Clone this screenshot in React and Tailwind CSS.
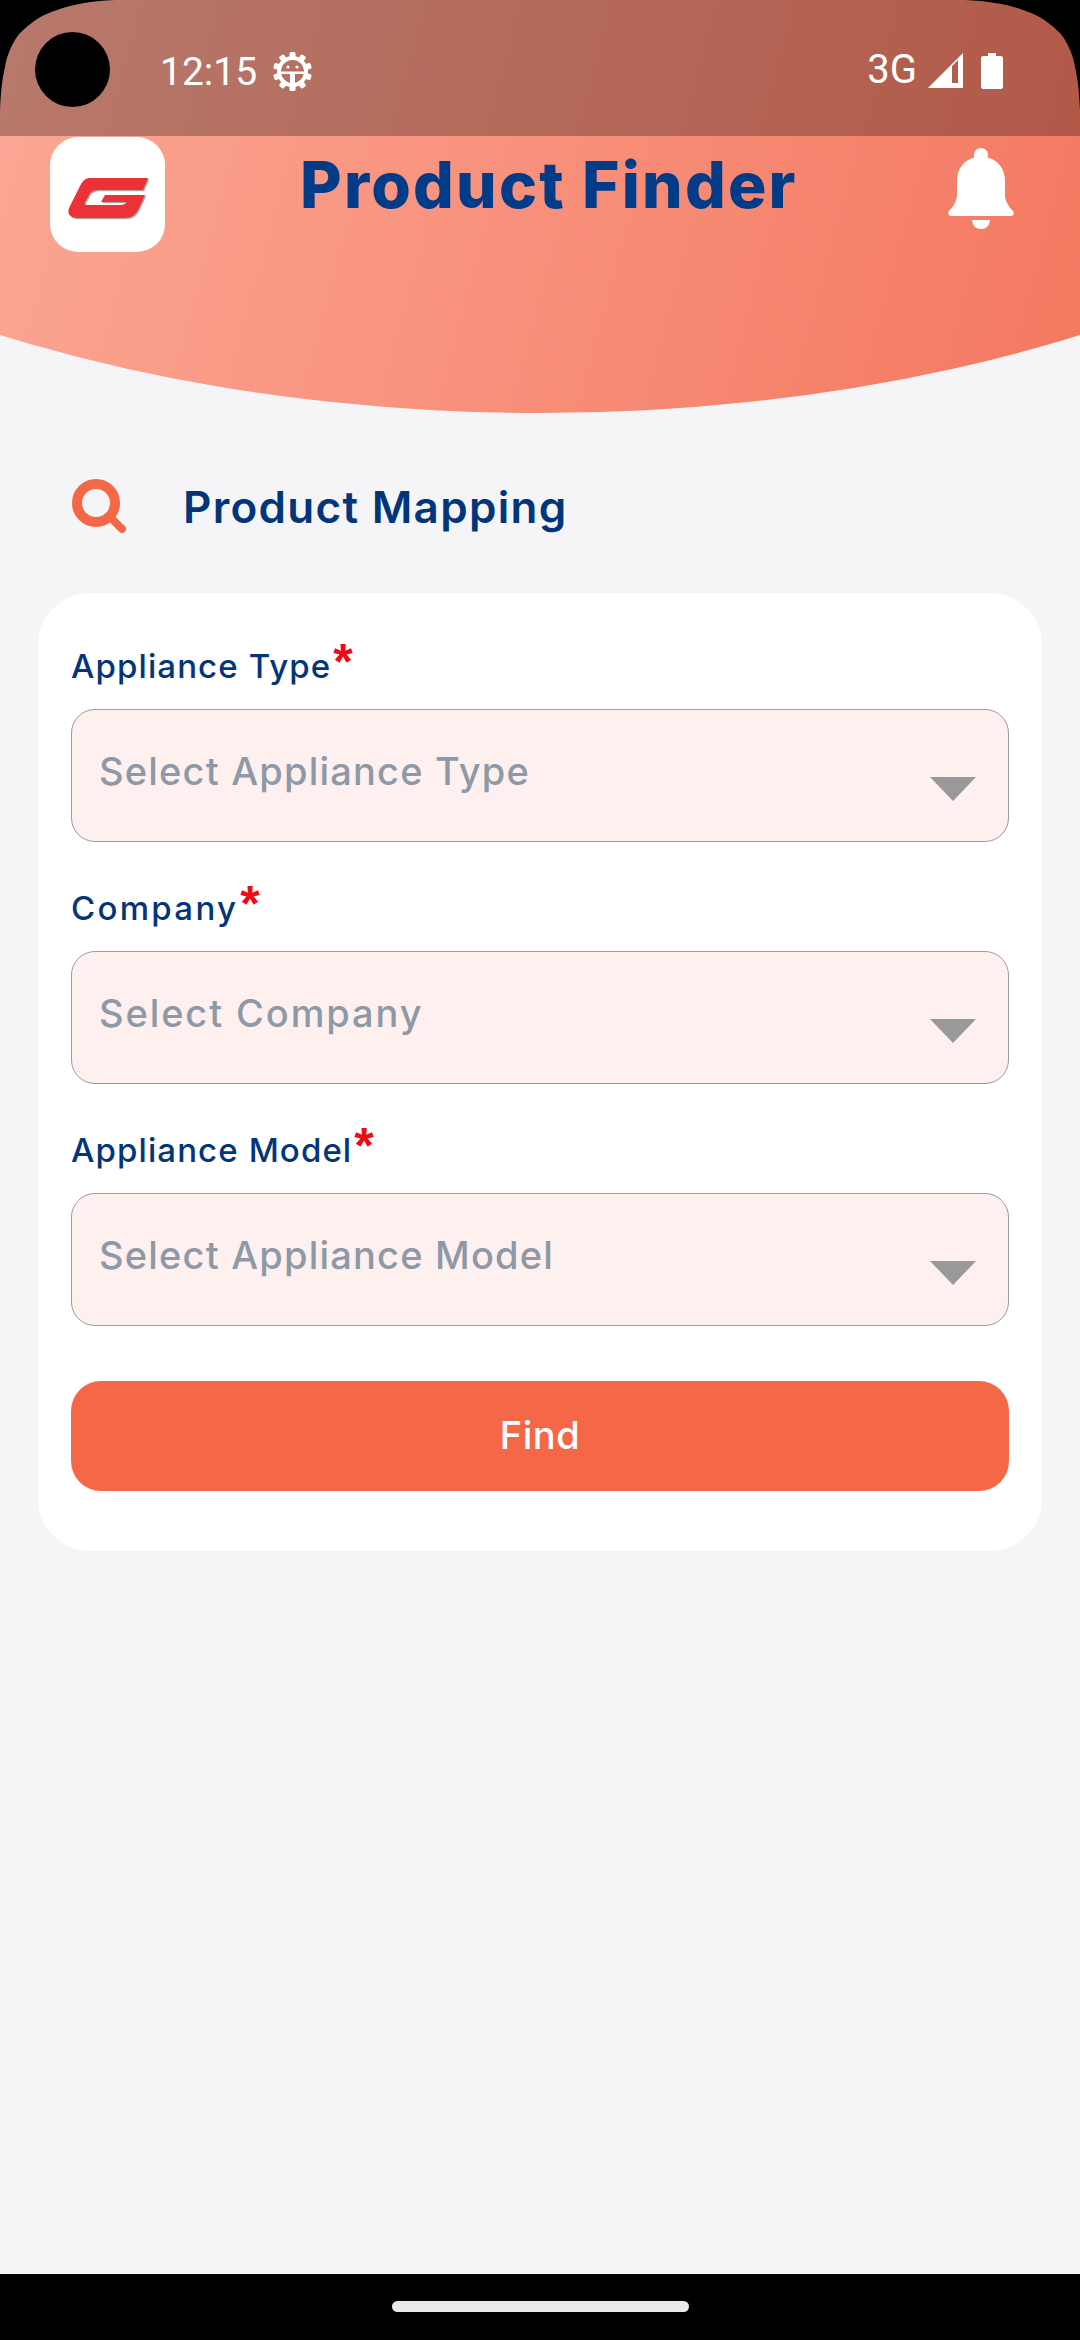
const ff = { fontFamily: 'Inter, "Liberation Sans", sans-serif' };

function Field({ label, placeholder, labelClass, placeholderClass }) {
  return (
    <div className="flex flex-col">
      <div className="flex h-[68px] items-start">
        <span className={`mt-px text-[33px] leading-[48px] font-medium text-[#03357a] ${labelClass}`}>{label}</span>
        <span className="-mt-[9px] ml-[2px] text-[50px] leading-[60px] font-bold text-[#f00a14]" style={{ fontFamily: '"Liberation Sans", sans-serif' }}>*</span>
      </div>
      <div className="relative flex h-[133px] items-start rounded-[24px] border-[1.5px] border-[#9c9aa3] bg-[#fdf0ee] pl-[27px] pt-[36px]">
        <span className={`text-[38px] leading-[50px] font-medium text-[#8e99a8] ${placeholderClass}`}>{placeholder}</span>
        <svg className="absolute right-[32px] top-[67px]" width="46" height="24" viewBox="0 0 46 24">
          <path d="M0 0H46L23 24Z" fill="#999999" />
        </svg>
      </div>
    </div>
  );
}

function Gear() {
  return (
    <svg width="39" height="39" viewBox="0 0 39 39">
      <g fill="#fff">
        {[0, 36, 72, 108, 144, 180, 216, 252, 288, 324].map((a) => (
          <rect key={a} x="16.5" y="0" width="6" height="8" rx="1.5" transform={`rotate(${a} 19.5 19.5)`} />
        ))}
      </g>
      <circle cx="19.5" cy="19.5" r="13.5" fill="none" stroke="#fff" strokeWidth="4" />
      <path d="M8 19.5H31V22H22V31H17V22H8Z" fill="#fff" />
      <circle cx="15" cy="15" r="1.6" fill="#fff" />
      <circle cx="24" cy="15" r="1.6" fill="#fff" />
    </svg>
  );
}

const corner = "M0 0H115C90 1 70 5 57 10C45 14 38 18 33 22C25 28 19 33 15 40C9 50 6 60 5 67C2 80 1 90 0 110Z";
const logo = "M22 1H80L75 13H31C26 13 23 14 21 18L17 25C16 27 17 28 19 28H52C55 28 58 27 59 25H33L37 18H77L71 31C68 38 63 41 56 41H10C2 41 -1 37 1 31L12 9C15 3 18 1 22 1Z";

export default function App() {
  return (
    <div className="relative flex h-[2340px] w-[1080px] flex-col overflow-hidden bg-black" style={ff}>
      <main className="flex-1 bg-[#f5f5f8]">
        <header className="h-[413px] bg-[linear-gradient(105deg,#fba795,#f47860)] [clip-path:ellipse(1080px_582px_at_50%_-169px)]">
          <div className="flex h-[136px] items-center bg-black/27 pl-[160px] pr-[77px] text-white">
            <span className="mt-[8px] text-[39px] leading-none" style={{ fontFamily: 'Roboto, sans-serif' }}>12:15</span>
            <span className="ml-[16px] mt-[6px]"><Gear /></span>
            <span className="ml-auto mt-[3px] text-[40px] leading-none" style={{ fontFamily: 'Roboto, sans-serif' }}>3G</span>
            <svg className="ml-[11px] mt-[5px]" width="35" height="35" viewBox="0 0 35 35">
              <path fillRule="evenodd" d="M0 35L35 0V35ZM24 13V30H30V7Z" fill="#fff" />
            </svg>
            <svg className="ml-[18px] mt-[6px]" width="22" height="36" viewBox="0 0 22 36">
              <path d="M7 0H15V3H20C21 3 22 4 22 5V34C22 35 21 36 20 36H2C1 36 0 35 0 34V5C0 4 1 3 2 3H7Z" fill="#fff" />
            </svg>
          </div>
          <div className="flex items-start pl-[50px] pr-[66px]">
            <div className="mt-px flex h-[115px] w-[115px] items-center justify-center rounded-[28px] bg-white">
              <svg width="82" height="44" viewBox="0 0 82 44" className="ml-[2px] mt-[8px]">
                <path d={logo} fill="#a9a9a9" transform="translate(1.2 1.2)" />
                <path d={logo} fill="#ed3237" />
              </svg>
            </div>
            <h1 className="ml-[135px] mt-[9px] text-[64px] leading-[80px] font-extrabold text-[#023b87] tracking-[2.2px]">Product Finder</h1>
            <svg className="ml-auto mt-[12px]" width="66" height="81" viewBox="0 0 66 81" fill="#fff">
              <path d="M33 0C29 0 26 3 26 7C26 8 26 9 26.5 9.5C16 12 9 21 9 33V47C9 53 5 59 1 63C0 64 -0.5 68 3 68H63C66.5 68 66 64 65 63C61 59 57 53 57 47V33C57 21 50 12 39.5 9.5C40 9 40 8 40 7C40 3 37 0 33 0Z" />
              <path d="M24 72H42C41.5 78 38 81 33 81S24.5 78 24 72Z" />
            </svg>
          </div>
        </header>
        <section className="mt-[66px] flex h-[54px] items-center pl-[72px]">
          <svg width="54" height="54" viewBox="0 0 54 54" fill="none" stroke="#f46847">
            <circle cx="24" cy="24" r="19" strokeWidth="10" />
            <path d="M38 38L50 50" strokeWidth="8" strokeLinecap="round" />
          </svg>
          <h2 className="ml-[57px] mt-[2px] text-[44px] leading-[54px] font-semibold text-[#03357a] tracking-[1.3px]">Product Mapping</h2>
        </section>
        <section className="mx-[38px] mt-[60px] flex h-[958px] flex-col rounded-[52px] bg-white px-[33px] pt-[48px]">
          <div className="flex flex-col gap-[41px]">
            <Field label="Appliance Type" placeholder="Select Appliance Type" labelClass="tracking-[1.1px]" placeholderClass="tracking-[1.2px]" />
            <Field label="Company" placeholder="Select Company" labelClass="tracking-[2.3px]" placeholderClass="tracking-[1.9px]" />
            <Field label="Appliance Model" placeholder="Select Appliance Model" labelClass="tracking-[1.1px]" placeholderClass="tracking-[1.2px]" />
          </div>
          <button className="mt-[55px] flex h-[110px] w-full items-center justify-center rounded-[30px] bg-[#f46847] pb-[2px] text-[38px] font-medium tracking-[0.5px] text-white">Find</button>
        </section>
      </main>
      <nav className="flex h-[66px] items-start justify-center bg-black pt-[27px]">
        <div className="h-[11px] w-[297px] rounded-full bg-[#eaeaea]" />
      </nav>
      <svg className="absolute left-0 top-0" width="120" height="120" viewBox="0 0 120 120">
        <path d={corner} fill="#000" />
      </svg>
      <svg className="absolute right-0 top-0 -scale-x-100" width="120" height="120" viewBox="0 0 120 120">
        <path d={corner} fill="#000" />
      </svg>
      <div className="absolute left-[35px] top-[32px] h-[75px] w-[75px] rounded-full bg-black" />
    </div>
  );
}
